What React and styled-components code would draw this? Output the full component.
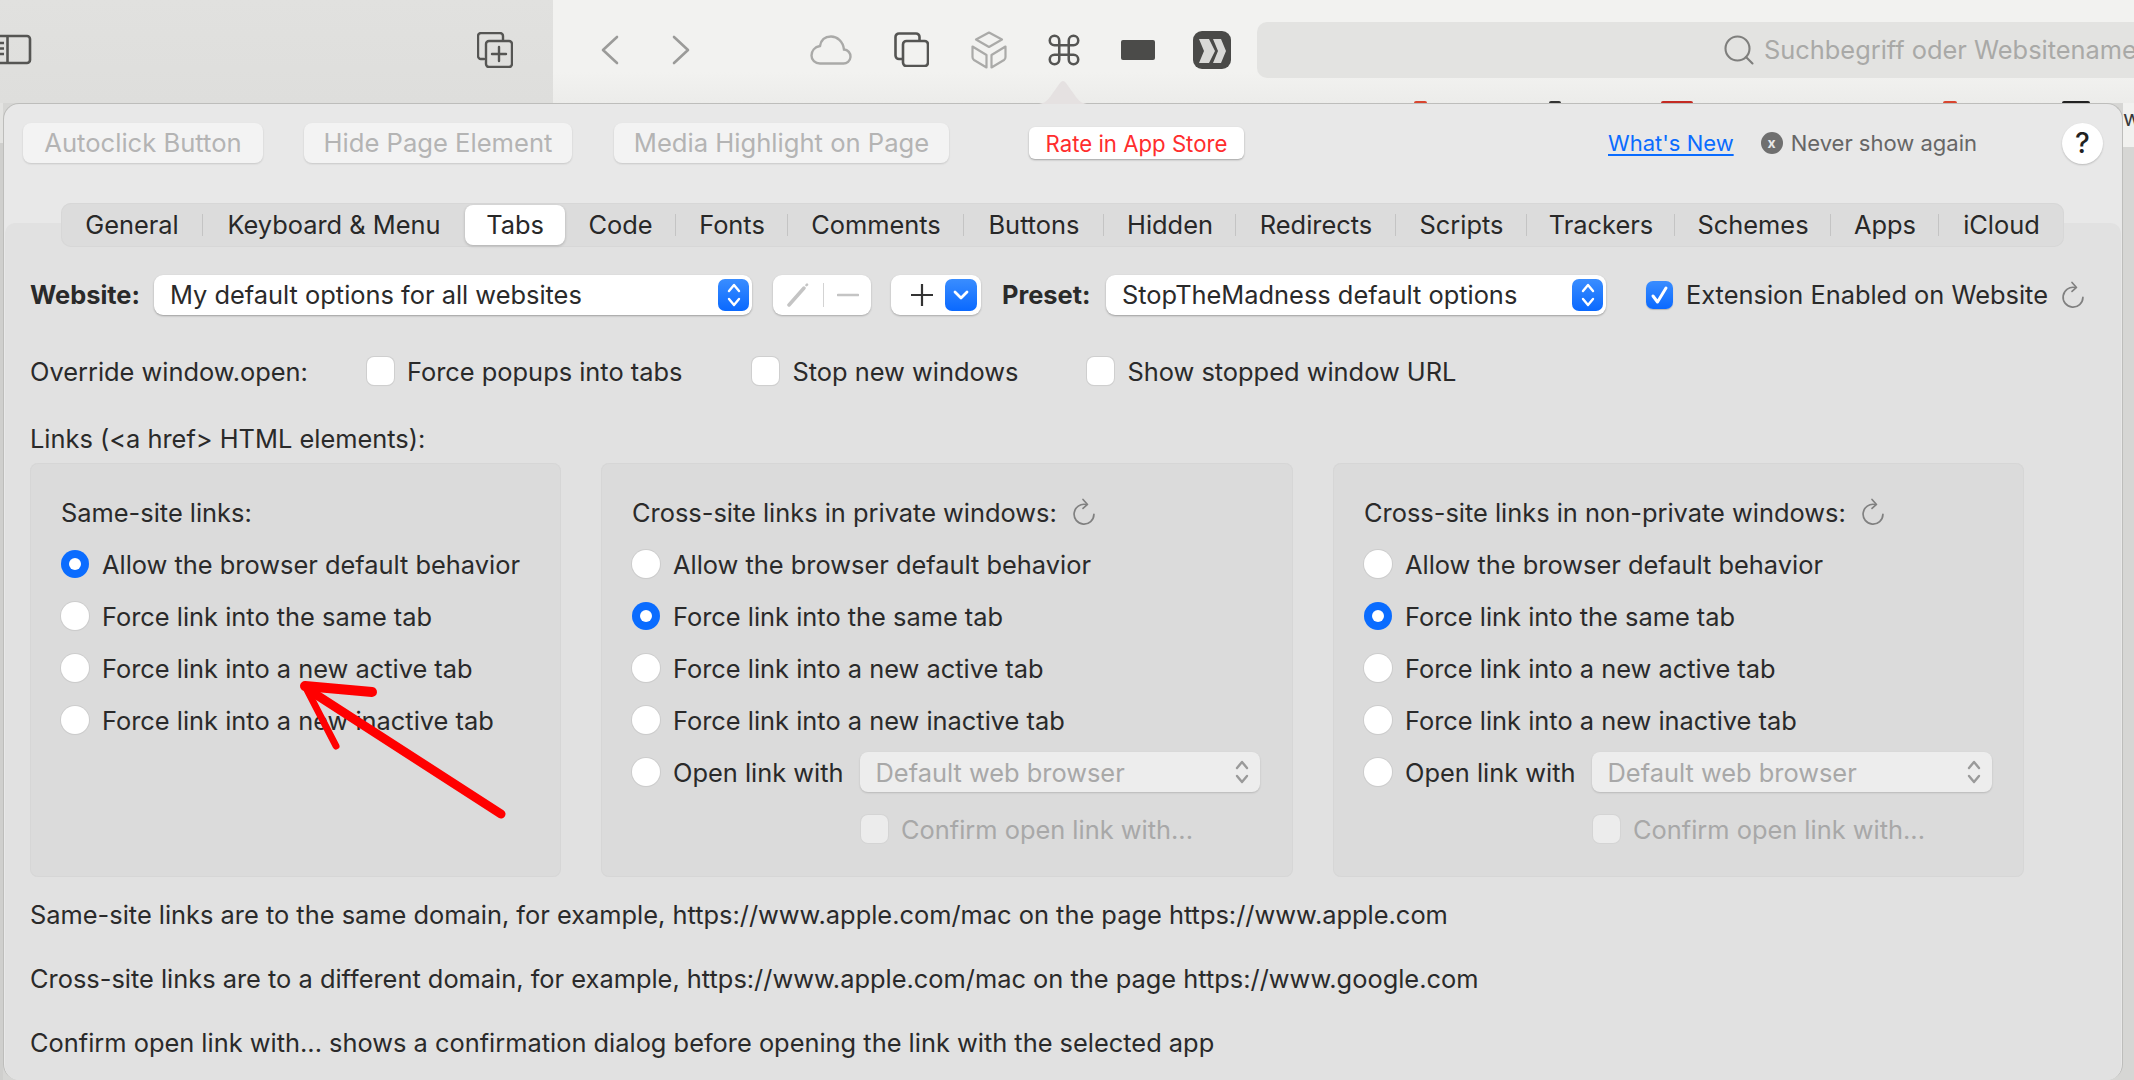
import React from 'react';
import styled, { createGlobalStyle } from 'styled-components';
import { Command, Search } from 'lucide-react';

const GlobalStyle = createGlobalStyle`
  html, body {
    margin: 0;
    padding: 0;
    background: #d6d6d4;
  }
  body {
    font-family: Inter, "Noto Sans", sans-serif;
    -webkit-font-smoothing: antialiased;
  }
`;

const Page = styled.div`
  position: relative;
  width: 2134px;
  height: 1080px;
  overflow: hidden;
  display: flex;
  flex-direction: column;
`;

/* browser toolbar */
const Toolbar = styled.header`
  position: relative;
  display: flex;
  flex: none;
  height: 103px;
`;

const SidebarPane = styled.div`
  display: flex;
  align-items: center;
  justify-content: space-between;
  width: 553px;
  padding: 0 40px 4px 0;
  box-sizing: border-box;
  background: linear-gradient(#e1e1df, #dededc);
`;

const MainPane = styled.div`
  display: flex;
  flex: 1;
  align-items: center;
  min-width: 0;
  padding: 0 0 4px 47px;
  background: linear-gradient(#f2f2f0 70%, #ececea);
`;

const NavGroup = styled.div`
  display: flex;
  align-items: center;
  gap: 52px;
  margin-right: 120px;
`;

const ToolGroup = styled.div`
  display: flex;
  align-items: center;
  gap: 42px;
  margin-right: 26px;
`;

const CommandBox = styled.span`
  display: flex;
  align-items: center;
  justify-content: center;
  width: 30px;
  height: 34px;
  color: #555553;
  svg {
    flex: none;
  }
`;

const ExtensionBadge = styled.span`
  display: block;
  width: 34px;
  height: 20px;
  border-radius: 2px;
  background: #4b4b49;
`;

const StopMark = styled.svg`
  margin-left: -4px;
`;

const SearchField = styled.div`
  display: flex;
  flex: none;
  align-items: center;
  gap: 7px;
  width: 1000px;
  height: 56px;
  padding-left: 464px;
  box-sizing: border-box;
  border-radius: 10px;
  background: #e3e3e1;
  color: #a9a9a7;
  font-size: 25.4px;
  white-space: nowrap;
  svg {
    flex: none;
    color: #7f7f7d;
  }
`;

const FavPeek = styled.span`
  position: absolute;
  bottom: 0;
  left: ${p => p.$x}px;
  width: ${p => p.$w}px;
  height: 2px;
  border-radius: 2px 2px 0 0;
  background: ${p => p.$color};
`;

const Body = styled.div`
  display: flex;
  flex: 1;
  min-height: 0;
`;

const LeftEdge = styled.div`
  flex: none;
  width: 3px;
  background: linear-gradient(#e3e3e1 40px, #cfcfcd 40px);
`;

const RightEdge = styled.div`
  flex: 1;
  display: flex;
  flex-direction: column;
`;

const RightEdgeTop = styled.div`
  height: 44px;
  padding: 2px 0 0 0;
  box-sizing: border-box;
  background: #f1f1ef;
  color: #3a3a3a;
  font-size: 22px;
  line-height: 26px;
  overflow: hidden;
`;

const RightEdgeRest = styled.div`
  flex: 1;
  background: #d6d6d4;
`;

/* popover */
const Popover = styled.section`
  position: relative;
  flex: none;
  display: flex;
  flex-direction: column;
  width: 2120px;
  box-sizing: border-box;
  border: 1px solid #bdbdbb;
  border-width: 1px 1px 0 1px;
  border-radius: 16px;
  background: #e8e8e8;
`;

const Caret = styled.svg`
  position: absolute;
  top: -26px;
  left: 1033px;
`;

const PromoBar = styled.div`
  display: flex;
  align-items: center;
  height: 40px;
  margin: 19px 0 40px;
  padding: 0 19px 0 19px;
`;

const PromoButton = styled.div`
  display: flex;
  align-items: center;
  justify-content: center;
  box-sizing: border-box;
  width: ${p => p.$w}px;
  height: 40px;
  margin-right: ${p => p.$gap}px;
  padding-bottom: 2px;
  border-radius: 8px;
  background: #f3f3f3;
  box-shadow: 0 1px 2px rgba(0, 0, 0, 0.14);
  color: #b4b4b4;
  font-size: 25.6px;
`;

const RateButton = styled.div`
  display: flex;
  align-items: center;
  justify-content: center;
  width: 215px;
  height: 32px;
  border-radius: 6px;
  background: #fff;
  box-shadow: 0 1px 2px rgba(0, 0, 0, 0.3);
  color: #ff2d2d;
  font-size: 22.2px;
`;

const NewsLink = styled.a`
  margin-left: auto;
  color: #0a6cff;
  font-size: 22px;
  text-decoration: underline;
  text-underline-offset: 3px;
`;

const DismissIcon = styled.span`
  display: flex;
  align-items: center;
  justify-content: center;
  width: 22px;
  height: 22px;
  margin: 0 8px 0 27px;
  border-radius: 50%;
  background: #6f6f6f;
  color: #e8e8e8;
  font-size: 14px;
  font-weight: 700;
  line-height: 1;
`;

const DismissText = styled.span`
  color: #666;
  font-size: 22px;
`;

const HelpButton = styled.div`
  display: flex;
  align-items: center;
  justify-content: center;
  width: 41px;
  height: 41px;
  margin-left: 85px;
  border-radius: 50%;
  background: #fff;
  box-shadow: 0 1px 2px rgba(0, 0, 0, 0.2);
  color: #222;
  font-size: 28px;
  font-weight: 500;
`;

const TabBar = styled.nav`
  position: relative;
  z-index: 1;
  display: flex;
  align-items: center;
  height: 44px;
  margin: 0 0 -24px 57px;
  width: 2003px;
  border-radius: 10px;
  background: #dcdcdc;
  box-shadow: inset 0 0 0 1px #d7d7d7;
`;

const Tab = styled.div`
  position: relative;
  display: flex;
  flex: none;
  align-items: center;
  justify-content: center;
  box-sizing: border-box;
  width: ${p => p.$w}px;
  height: 40px;
  padding-bottom: 2px;
  border-radius: 8px;
  background: ${p => (p.$active ? '#fff' : 'transparent')};
  box-shadow: ${p => (p.$active ? '0 1px 3px rgba(0,0,0,.22)' : 'none')};
  color: #282828;
  font-size: 25.4px;
  &::after {
    content: '';
    display: ${p => (p.$line ? 'block' : 'none')};
    position: absolute;
    top: 9px;
    right: 0;
    width: 1px;
    height: 22px;
    background: #c4c4c4;
  }
`;

const Content = styled.main`
  flex: 1;
  margin: 0 1px;
  padding: 52px 0 0 25px;
  border-radius: 10px 10px 14px 14px;
  background: #e1e1e1;
  color: #2a2a2a;
  font-size: 25.4px;
`;

const OptionsRow = styled.div`
  display: flex;
  align-items: center;
  height: 40px;
`;

const BoldLabel = styled.label`
  flex: none;
  width: ${p => p.$w}px;
  margin: 0 12px 2px ${p => p.$gap || 0}px;
  font-weight: 700;
  white-space: nowrap;
`;

const SelectBox = styled.div`
  display: flex;
  flex: none;
  align-items: center;
  justify-content: space-between;
  box-sizing: border-box;
  width: ${p => p.$w}px;
  height: 40px;
  padding: 0 3px 0 16px;
  border-radius: 9px;
  background: #fff;
  box-shadow: 0 1px 2px rgba(0, 0, 0, 0.3);
  white-space: nowrap;
`;

const SelectText = styled.span`
  margin-bottom: 2px;
`;

const BlueBox = styled.span`
  display: flex;
  flex: none;
  align-items: center;
  justify-content: center;
  width: ${p => p.$w}px;
  height: 32px;
  margin-left: ${p => p.$gap || 0}px;
  border-radius: 7px;
  background: linear-gradient(#3a8dff, #0a69ff);
`;

const IconGroup = styled.div`
  display: flex;
  flex: none;
  align-items: center;
  box-sizing: border-box;
  width: ${p => p.$w}px;
  height: 40px;
  margin-left: ${p => p.$gap}px;
  padding-left: ${p => p.$pad}px;
  border-radius: 9px;
  background: #fff;
  box-shadow: 0 1px 2px rgba(0, 0, 0, 0.25);
`;

const GroupDivider = styled.span`
  display: block;
  width: 1px;
  height: 24px;
  margin: 0 13px 0 14px;
  background: #d3d3d3;
`;

const CheckBox = styled.span`
  display: flex;
  flex: none;
  align-items: center;
  justify-content: center;
  box-sizing: border-box;
  width: 27px;
  height: 28px;
  border-radius: 7px;
  background: ${p => (p.$checked ? 'linear-gradient(#3a8dff, #0a69ff)' : p.$disabled ? '#ececec' : '#fff')};
  box-shadow: ${p => (p.$checked ? '0 1px 1px rgba(0,0,0,.2)' : p.$disabled ? '0 0 0 1px #d4d4d4' : '0 0 0 1px #cfcfcf, 0 1px 1px rgba(0,0,0,.08)')};
`;

const CheckItem = styled.label`
  display: flex;
  align-items: center;
  gap: 13px;
  margin-left: ${p => p.$gap}px;
  white-space: nowrap;
  color: ${p => (p.$disabled ? '#a8a8a8' : 'inherit')};
`;

const Reload = ({ size = 24 }) => (
  <svg width={size} height={size * 1.2} viewBox="0 0 24 29" fill="none" stroke="#808080" strokeWidth="1.7" strokeLinecap="round" strokeLinejoin="round">
    <path d="M14 6.500A10 10 0 1 0 22 16.500" />
    <path d="M11 1.500l4.500 5-4.500 4" />
  </svg>
);

const PlainRow = styled.div`
  display: flex;
  align-items: center;
  height: ${p => p.$h}px;
  margin-top: ${p => p.$top}px;
  white-space: nowrap;
`;

const RowLabel = styled.span`
  flex: none;
  width: ${p => p.$w}px;
`;

const PanelRow = styled.div`
  display: flex;
  gap: 40px;
  margin-top: 10px;
`;

const Panel = styled.section`
  display: flex;
  flex-direction: column;
  gap: 22px;
  box-sizing: border-box;
  width: ${p => p.$w}px;
  height: 414px;
  padding: 34px 0 0 31px;
  border-radius: 8px;
  background: #dbdbdb;
  box-shadow: inset 0 0 0 1px #d6d6d6;
`;

const PanelTitle = styled.div`
  display: flex;
  align-items: center;
  gap: 15px;
  height: 30px;
  white-space: nowrap;
`;

const RadioRow = styled.label`
  display: flex;
  align-items: center;
  gap: 13px;
  height: 30px;
  white-space: nowrap;
`;

const RadioDot = styled.span`
  display: flex;
  flex: none;
  align-items: center;
  justify-content: center;
  box-sizing: border-box;
  width: 28px;
  height: 28px;
  border-radius: 50%;
  background: ${p => (p.$on ? '#0a6cff' : '#fff')};
  box-shadow: ${p => (p.$on ? 'none' : '0 0 0 1px #cdcdcd, 0 1px 1px rgba(0,0,0,.08)')};
  &::after {
    content: '';
    display: ${p => (p.$on ? 'block' : 'none')};
    width: 12px;
    height: 12px;
    border-radius: 50%;
    background: #fff;
  }
`;

const AppSelect = styled.div`
  display: flex;
  flex: none;
  align-items: center;
  justify-content: space-between;
  box-sizing: border-box;
  width: 400px;
  height: 40px;
  margin-left: 3px;
  padding: 0 10px 0 16px;
  border-radius: 8px;
  background: #ededed;
  box-shadow: 0 1px 2px rgba(0, 0, 0, 0.16);
  color: #a8a8a8;
`;

const ConfirmRow = styled.div`
  display: flex;
  align-items: center;
  height: 30px;
  margin-top: 5px;
  padding-left: 229px;
`;

const Notes = styled.div`
  display: flex;
  flex-direction: column;
  gap: 34px;
  margin-top: 23px;
`;

const Note = styled.p`
  height: 30px;
  margin: 0;
  line-height: 30px;
  white-space: nowrap;
`;

const ArrowMark = styled.svg`
  position: absolute;
  top: 670px;
  left: 290px;
`;

const UpDown = ({ color = '#fff' }) => (
  <svg width="16" height="26" viewBox="0 0 16 26" fill="none" stroke={color} strokeWidth="2.4" strokeLinecap="round" strokeLinejoin="round">
    <path d="M3 9l5-6 5 6" />
    <path d="M3 17l5 6 5-6" />
  </svg>
);

const tabs = [
  ['General', 142, true],
  ['Keyboard & Menu', 262, false],
  ['Tabs', 100, false, true],
  ['Code', 111, true],
  ['Fonts', 112, true],
  ['Comments', 176, true],
  ['Buttons', 140, true],
  ['Hidden', 132, true],
  ['Redirects', 160, true],
  ['Scripts', 131, true],
  ['Trackers', 148, true],
  ['Schemes', 156, true],
  ['Apps', 108, true],
  ['iCloud', 125, false],
];

const LinkPanel = ({ title, width, selected, reload, openWith }) => {
  const options = [
    'Allow the browser default behavior',
    'Force link into the same tab',
    'Force link into a new active tab',
    'Force link into a new inactive tab',
  ];
  return (
    <Panel $w={width}>
      <PanelTitle>
        {title}
        {reload && <Reload />}
      </PanelTitle>
      {options.map((text, i) => (
        <RadioRow key={text}>
          <RadioDot $on={i === selected} />
          {text}
        </RadioRow>
      ))}
      {openWith && (
        <>
          <RadioRow>
            <RadioDot />
            Open link with
            <AppSelect>
              Default web browser
              <UpDown color="#9a9a9a" />
            </AppSelect>
          </RadioRow>
          <ConfirmRow>
            <CheckItem $gap={0} $disabled>
              <CheckBox $disabled />
              Confirm open link with...
            </CheckItem>
          </ConfirmRow>
        </>
      )}
    </Panel>
  );
};

export default function App() {
  return (
    <Page>
      <GlobalStyle />
      <Toolbar>
        <SidebarPane>
          <svg width="32" height="31" viewBox="0 0 32 31" fill="none" stroke="#555553" strokeWidth="2.6">
            <rect x="-8" y="2" width="38" height="27" rx="3" />
            <path d="M7.500 2v27" />
            <path d="M0 9h4M0 14.500h4M0 20h4" />
          </svg>
          <svg width="36" height="36" viewBox="0 0 36 36" fill="none" stroke="#555553" strokeWidth="2.4" strokeLinecap="round">
            <path d="M7 27H4a3 3 0 0 1-3-3V4a3 3 0 0 1 3-3h19a3 3 0 0 1 3 3v4" />
            <rect x="9" y="9" width="26" height="26" rx="3" />
            <path d="M22 15v14M15 22h14" />
          </svg>
        </SidebarPane>
        <MainPane>
          <NavGroup>
            <svg width="20" height="30" viewBox="0 0 20 30" fill="none" stroke="#9b9b99" strokeWidth="2.6" strokeLinecap="round" strokeLinejoin="round">
              <path d="M17 2L3 15l14 13" />
            </svg>
            <svg width="18" height="30" viewBox="0 0 18 30" fill="none" stroke="#9b9b99" strokeWidth="2.6" strokeLinecap="round" strokeLinejoin="round">
              <path d="M2 2l14 13L2 28" />
            </svg>
          </NavGroup>
          <ToolGroup>
            <svg width="42" height="30" viewBox="0 0 42 30" fill="none" stroke="#aaaaa8" strokeWidth="2.4">
              <path d="M10 28.500H33a7 7 0 0 0 1-14C33 6 27 1.500 21 1.500 15 1.500 11 5 10 11 4.500 12 1.500 16 1.500 20.500 1.500 25 5 28.500 10 28.500Z" />
            </svg>
            <svg width="35" height="35" viewBox="0 0 35 35" fill="none" stroke="#555553" strokeWidth="2.6">
              <path d="M8 27H5a3.500 3.500 0 0 1-3.500-3.500V5A3.500 3.500 0 0 1 5 1.500h17A3.500 3.500 0 0 1 25.500 5v3" />
              <rect x="9" y="9" width="25" height="25" rx="3.500" />
            </svg>
            <svg width="36" height="38" viewBox="0 0 36 38" fill="none" stroke="#aaaaa8" strokeWidth="2.2" strokeLinejoin="round">
              <path d="M18 1.500L31 8.500 18 16 5 8.500Z" />
              <path d="M1.500 15.500L15.500 24V36.500L3 29Q1.500 28 1.500 26Z" />
              <path d="M34.500 15.500L20.500 24V36.500L33 29Q34.500 28 34.500 26Z" />
            </svg>
            <CommandBox>
              <Command size={38} strokeWidth={1.6} />
            </CommandBox>
            <ExtensionBadge />
            <StopMark width="38" height="38" viewBox="0 0 38 38">
              <rect width="38" height="38" rx="9" fill="#4a4a48" />
              <path d="M6 8h10l6 12-6 12H6l5-12Z" fill="#d9d9d7" />
              <path d="M20 8h8l5 12-5 12h-8l5-12Z" fill="#d9d9d7" />
            </StopMark>
          </ToolGroup>
          <SearchField>
            <Search size={36} strokeWidth={1.4} />
            Suchbegriff oder Websitename
          </SearchField>
        </MainPane>
        <FavPeek $x={1414} $w={13} $color="#d8452f" />
        <FavPeek $x={1549} $w={12} $color="#333" />
        <FavPeek $x={1661} $w={32} $color="#c42a22" />
        <FavPeek $x={1943} $w={14} $color="#d8452f" />
        <FavPeek $x={2062} $w={28} $color="#222" />
      </Toolbar>
      <Body>
        <LeftEdge />
        <Popover>
          <Caret width="52" height="26" viewBox="0 0 52 26">
            <path d="M0 26C6 26 9 24 13 19L23 5Q26 1 29 5L39 19C43 24 46 26 52 26Z" fill="#e5e1e1" />
          </Caret>
          <PromoBar>
            <PromoButton $w={240} $gap={41}>Autoclick Button</PromoButton>
            <PromoButton $w={268} $gap={42}>Hide Page Element</PromoButton>
            <PromoButton $w={335} $gap={80}>Media Highlight on Page</PromoButton>
            <RateButton>Rate in App Store</RateButton>
            <NewsLink>What's New</NewsLink>
            <DismissIcon>x</DismissIcon>
            <DismissText>Never show again</DismissText>
            <HelpButton>?</HelpButton>
          </PromoBar>
          <TabBar>
            {tabs.map(([name, w, line, active]) => (
              <Tab key={name} $w={w} $line={line} $active={active}>{name}</Tab>
            ))}
          </TabBar>
          <Content>
            <OptionsRow>
              <BoldLabel $w={112}>Website:</BoldLabel>
              <SelectBox $w={598}>
                <SelectText>My default options for all websites</SelectText>
                <BlueBox $w={31}><UpDown /></BlueBox>
              </SelectBox>
              <IconGroup $w={98} $gap={21} $pad={14}>
                <svg width="22" height="24" viewBox="0 0 22 24" fill="none" stroke="#c4c4c4" strokeWidth="3.500" strokeLinecap="round">
                  <path d="M2 22L17 5" />
                  <path d="M19.500 2.200l.5-.5" strokeWidth="2.500" />
                </svg>
                <GroupDivider />
                <svg width="22" height="4" viewBox="0 0 22 4" stroke="#c4c4c4" strokeWidth="2.600" strokeLinecap="round">
                  <path d="M1 2h20" />
                </svg>
              </IconGroup>
              <IconGroup $w={90} $gap={20} $pad={20}>
                <svg width="22" height="22" viewBox="0 0 22 22" stroke="#333" strokeWidth="2.200">
                  <path d="M11 0v22M0 11h22" />
                </svg>
                <BlueBox $w={32} $gap={12}>
                  <svg width="16" height="12" viewBox="0 0 16 12" fill="none" stroke="#fff" strokeWidth="2.800" strokeLinecap="round" strokeLinejoin="round">
                    <path d="M2 3l6 6 6-6" />
                  </svg>
                </BlueBox>
              </IconGroup>
              <BoldLabel $w={92} $gap={21}>Preset:</BoldLabel>
              <SelectBox $w={500}>
                <SelectText>StopTheMadness default options</SelectText>
                <BlueBox $w={31}><UpDown /></BlueBox>
              </SelectBox>
              <CheckItem $gap={40}>
                <CheckBox $checked>
                  <svg width="19" height="20" viewBox="0 0 19 20" fill="none" stroke="#fff" strokeWidth="3" strokeLinecap="round" strokeLinejoin="round">
                    <path d="M3 11l4.500 6L16 3" />
                  </svg>
                </CheckBox>
                <SelectText>Extension Enabled on Website</SelectText>
                <Reload />
              </CheckItem>
            </OptionsRow>
            <PlainRow $h={30} $top={41}>
              <RowLabel $w={337}>Override window.open:</RowLabel>
              <CheckItem $gap={0}><CheckBox />Force popups into tabs</CheckItem>
              <CheckItem $gap={70}><CheckBox />Stop new windows</CheckItem>
              <CheckItem $gap={69}><CheckBox />Show stopped window URL</CheckItem>
            </PlainRow>
            <PlainRow $h={30} $top={37}>{'Links (<a href> HTML elements):'}</PlainRow>
            <PanelRow>
              <LinkPanel title="Same-site links:" width={531} selected={0} />
              <LinkPanel title="Cross-site links in private windows:" width={692} selected={1} reload openWith />
              <LinkPanel title="Cross-site links in non-private windows:" width={691} selected={1} reload openWith />
            </PanelRow>
            <Notes>
              <Note>Same-site links are to the same domain, for example, https://www.apple.com/mac on the page https://www.apple.com</Note>
              <Note>Cross-site links are to a different domain, for example, https://www.apple.com/mac on the page https://www.google.com</Note>
              <Note>Confirm open link with... shows a confirmation dialog before opening the link with the selected app</Note>
            </Notes>
          </Content>
        </Popover>
        <RightEdge>
          <RightEdgeTop>w</RightEdgeTop>
          <RightEdgeRest />
        </RightEdge>
      </Body>
      <ArrowMark width="220" height="155" viewBox="290 670 220 155" fill="none" stroke="#ff0000" strokeLinecap="round">
        <path d="M501 814L312 692" strokeWidth="9" />
        <path d="M305 686L372 692" strokeWidth="10" />
        <path d="M305 686L336 746" strokeWidth="7" />
      </ArrowMark>
    </Page>
  );
}
